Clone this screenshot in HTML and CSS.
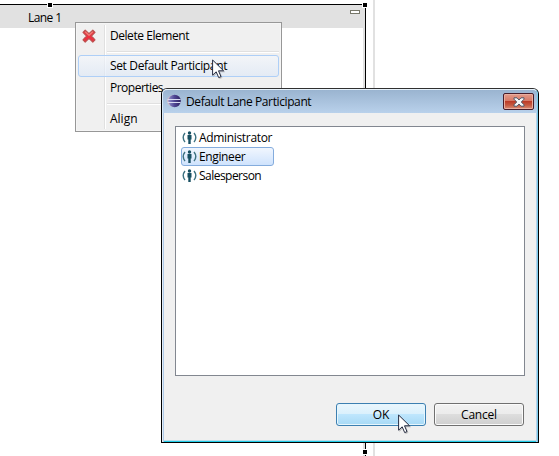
FILE: index.html
```html
<!DOCTYPE html>
<html lang="en">
<head>
<meta charset="utf-8">
<title>Default Lane Participant</title>
<link rel="stylesheet" href="styles.css">
</head>
<body>
<main class="canvas">
  <section class="pool">
    <header class="lane-header"><span class="lane-name">Lane 1</span><span class="minimize"></span></header>
    <i class="handle handle-top"></i>
    <i class="handle handle-corner"></i>
    <i class="handle handle-side"></i>
  </section>
  <div class="guide"></div>

  <nav class="menu">
    <div class="menu-item first">
      <svg class="menu-icon" width="14" height="14" viewBox="0 0 14 14"><path d="M3.2 1.2 7 4.7 10.8 1.2 13 3.4 9.4 7 13 10.8 10.8 13 7 9.4 3.2 13 1 10.8 4.6 7 1 3.4Z" fill="#f02f40" stroke="#bd5150" stroke-width="1.2" stroke-linejoin="round"/><path d="M3.2 2.8 7 6.2 10.8 2.8" fill="none" stroke="#ee7c74" stroke-width="1.5"/></svg>
      <span class="t-delete">Delete Element</span>
    </div>
    <div class="separator"></div>
    <div class="menu-item active"><span class="t-set">Set Default Participant</span></div>
    <div class="menu-item"><span class="t-props">Properties</span></div>
    <div class="separator second"></div>
    <div class="menu-item"><span class="t-align">Align</span></div>
  </nav>

  <section class="dialog">
    <header class="titlebar">
      <svg class="eclipse" width="14" height="14" viewBox="0 0 14 14"><defs><linearGradient id="orb" x2="1" y2="0"><stop offset="0" stop-color="#8f8ccc"/><stop offset=".5" stop-color="#4e4592"/><stop offset="1" stop-color="#2e2162"/></linearGradient></defs><ellipse cx="6" cy="7" rx="5.9" ry="5.8" fill="#d3bcc0"/><circle cx="7.6" cy="7" r="6.2" fill="url(#orb)"/><path d="M.6 5.5h13M.6 8.5h13" stroke="#d9dcf2" stroke-width="1"/></svg>
      <h1 class="t-title">Default Lane Participant</h1>
      <button class="close" aria-label="Close"><svg width="12" height="10" viewBox="0 0 12 10"><path d="M1 .8H4L6 3 8 .8H11V2.2L8.3 5 11 7.8V9.2H8L6 7 4 9.2H1V7.8L3.7 5 1 2.2Z" fill="#f4f6f8" stroke="#535666" stroke-width="1"/></svg></button>
    </header>
    <div class="content">
      <ul class="list">
        <li><svg class="person" width="15" height="14" viewBox="0 0 15 14"><path d="M3 2Q-.6 6.5 3 11M12 2Q15.6 6.5 12 11" fill="none" stroke="#3c7180" stroke-width="1.4"/><circle cx="7.5" cy="2" r="1.7" fill="#174f61"/><path d="M5.5 4h4v4.6h-.8V13H6.3V8.6h-.8Z" fill="#174f61"/></svg><span class="t-admin">Administrator</span></li>
        <li class="selected"><svg class="person" width="15" height="14" viewBox="0 0 15 14"><path d="M3 2Q-.6 6.5 3 11M12 2Q15.6 6.5 12 11" fill="none" stroke="#3c7180" stroke-width="1.4"/><circle cx="7.5" cy="2" r="1.7" fill="#174f61"/><path d="M5.5 4h4v4.6h-.8V13H6.3V8.6h-.8Z" fill="#174f61"/></svg><span class="t-eng">Engineer</span></li>
        <li><svg class="person" width="15" height="14" viewBox="0 0 15 14"><path d="M3 2Q-.6 6.5 3 11M12 2Q15.6 6.5 12 11" fill="none" stroke="#3c7180" stroke-width="1.4"/><circle cx="7.5" cy="2" r="1.7" fill="#174f61"/><path d="M5.5 4h4v4.6h-.8V13H6.3V8.6h-.8Z" fill="#174f61"/></svg><span class="t-sales">Salesperson</span></li>
      </ul>
      <footer class="actions"><button class="btn ok">OK</button><button class="btn">Cancel</button></footer>
    </div>
  </section>

  <svg class="cursor cursor-menu" width="13" height="20" viewBox="0 0 13 20"><path d="M.6 1V16.2L4.2 12.8 6.7 18.6 9 17.6 6.5 11.8H11.6Z" fill="#fff" stroke="#252b40" stroke-width="1"/></svg>
  <svg class="cursor cursor-ok" width="13" height="20" viewBox="0 0 13 20"><path d="M.6 1V16.2L4.2 12.8 6.7 18.6 9 17.6 6.5 11.8H11.6Z" fill="#fff" stroke="#252b40" stroke-width="1"/></svg>
</main>
</body>
</html>
```
FILE: styles.css
```css
* { box-sizing: border-box; }
body { margin: 0; background: #fff; color: #000; font: 12px/16px "Open Sans", "Noto Sans", sans-serif; }
span, h1 { white-space: nowrap; }
svg { flex: none; display: block; }
.canvas { position: relative; width: 559px; height: 456px; overflow: hidden; display: flex; }

.pool { position: relative; width: 366px; margin-top: 4px; border-top: 1px solid #000; border-right: 1px solid #000; box-shadow: inset -2px 0 #e1e1e1; }
.lane-header { display: flex; justify-content: space-between; height: 23px; background: #e1e1e1; padding: 5px 5px 0 28px; }
.lane-name { letter-spacing: -.6px; }
.minimize { width: 10px; height: 4px; border: 1px solid #77776a; background: #fff; }
.handle { position: absolute; width: 6px; height: 6px; background: #000; border: 1px solid #fff; }
.handle-top { left: 47px; top: -3px; }
.handle-corner { right: -3px; top: -3px; }
.handle-side { right: -3px; bottom: 1px; }
.guide { width: 2px; margin-left: 7px; background: #e1e1e1; }

.menu { position: absolute; left: 75px; top: 22px; width: 207px; height: 110px; border: 1px solid #979797; padding: 2px; background: linear-gradient(90deg, transparent 28px, #e0e0e0 28px, #e0e0e0 29px, #fff 29px, #fff 30px, transparent 30px) 0 2px / 100% 104px no-repeat, #f0f0f0; box-shadow: inset 0 0 0 1px #f5f5f5; }
.menu-item { display: flex; align-items: center; height: 22px; padding-left: 32px; }
.first { padding-left: 4px; }
.menu-icon { margin-right: 14px; }
.separator { height: 2px; margin: 4px 0 2px 29px; border-top: 1px solid #e0e0e0; background: #fff; }
.second { margin: 4px 0 3px 29px; }
.active { border: 1px solid #aecff7; border-radius: 3px; padding-left: 31px; background: linear-gradient(rgba(244,247,252,.65), rgba(221,232,247,.65)); }
.t-delete { letter-spacing: -.45px; }
.t-set { letter-spacing: -.35px; }
.t-props { letter-spacing: -.5px; }

.dialog { position: absolute; left: 161px; top: 88px; width: 378px; height: 355px; display: flex; flex-direction: column; border: 1px solid #000; border-top-color: #303030; border-radius: 6px 6px 0 0; background: #f0f0f0; box-shadow: inset 1px 0 #e4edf7, inset 2px 0 #b0cbe8, inset -1px 0 #79cceb, inset -2px 0 #b5d0e9, inset 0 -1px #20cce8, inset 0 -2px #b9ddea; }
.titlebar { display: flex; align-items: center; height: 24px; padding: 0 3px 0 4px; border-top: 1px solid #e7f2fb; border-left: 1px solid #d9e9f7; border-right: 1px solid #79cceb; border-radius: 5px 5px 0 0; background: linear-gradient(#9ab4d0, #b9d1eb); }
.titlebar h1 { margin: 0 auto 0 5px; font-size: 12px; font-weight: 400; }
.t-title { letter-spacing: -.39px; }
.eclipse { margin-top: -1px; }
.close { width: 31px; height: 17px; padding: 0; display: grid; place-items: center; border: 1px solid #471d2a; border-radius: 2px; box-shadow: inset 0 0 0 1px #e9aea0; background: linear-gradient(#e39c8b 0, #d67967 46%, #bd3c28 50%, #c65b43 75%, #da8f77 100%); }
.content { flex: 1; display: flex; flex-direction: column; justify-content: space-between; padding: 13px 13px 16px; }
.list { margin: 0; padding: 1px 5px; height: 250px; border: 1px solid #828790; background: #fff; list-style: none; }
.list li { display: flex; align-items: center; width: 93px; height: 19px; padding-left: 0; border: 1px solid transparent; border-radius: 3px; }
.person { margin: 1px 2px 0 0; }
.t-admin { letter-spacing: -.33px; }
.t-eng { letter-spacing: -.37px; }
.t-sales { letter-spacing: -.53px; }
.list .selected { border-color: #84acdd; background: linear-gradient(#f1f6fe, #cfe3fd); }
.actions { display: flex; justify-content: flex-end; gap: 8px; padding-right: 1px; }
.btn { width: 90px; height: 23px; padding: 1px 0 0; font: inherit; color: #000; letter-spacing: -.2px; border: 1px solid #707070; border-radius: 3px; box-shadow: inset 0 0 0 1px #fbfbfb; background: linear-gradient(#f2f2f2 0, #ebebeb 50%, #dddddd 50%, #cfcfcf 100%); }
.ok { border-color: #3c7fb1; box-shadow: inset 0 0 0 1px #e6f6fd; background: linear-gradient(#eaf6fd 0, #d9f0fc 50%, #bee6fd 50%, #a7d9f5 100%); }
.cursor { position: absolute; filter: drop-shadow(1px 1px 0 rgba(0,0,0,.18)); }
.cursor-menu { left: 212px; top: 59px; }
.cursor-ok { left: 398px; top: 414px; }
```
